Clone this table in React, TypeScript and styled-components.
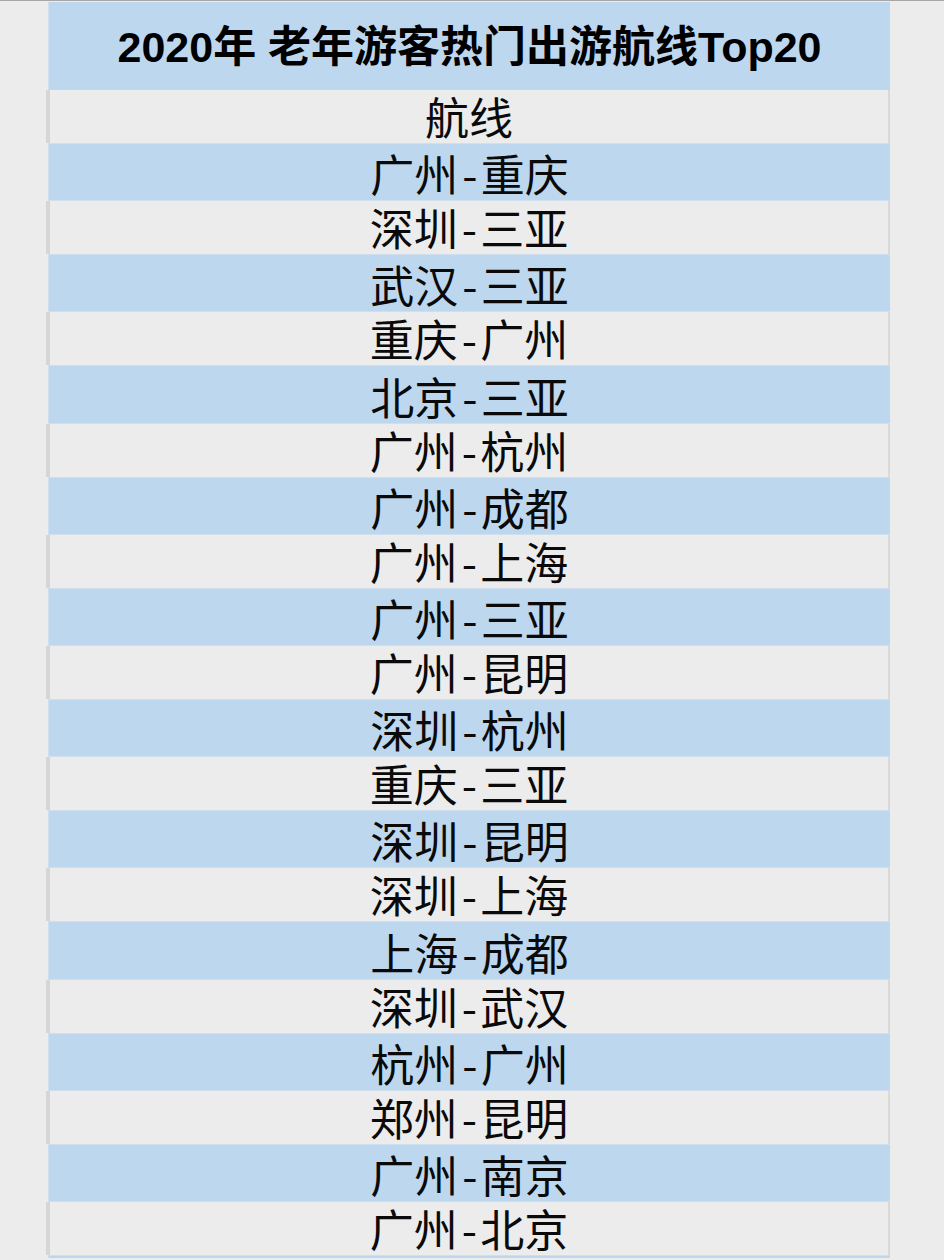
import React from "react";
import styled, { createGlobalStyle } from "styled-components";

const Global = createGlobalStyle`
  html, body {
    margin: 0;
    padding: 0;
    background: #ececec;
  }
  body {
    font-family: "Liberation Sans", "Noto Sans CJK SC", sans-serif;
    color: #000;
  }
`;

const Page = styled.div`
  border-top: 1px solid #a7a7a7;
  padding-top: 1px;
  height: 1258px;
  overflow: hidden;
  box-sizing: border-box;
`;

const Table = styled.div`
  display: flex;
  flex-direction: column;
  margin-left: 46px;
  width: 844px;
`;

const TitleRow = styled.div`
  margin-left: 2px;
  height: 88px;
  box-sizing: border-box;
  background: #bdd7ee;
  border-left: 1px solid #cfe0f0;
  display: flex;
  align-items: center;
  justify-content: center;
  font-family: "Liberation Sans", "Noto Sans CJK SC", sans-serif;
  font-weight: 700;
  font-size: 43px;
  line-height: 50px;
  padding-top: 2px;
  white-space: nowrap;
`;

const Row = styled.div<{ $blue: boolean }>`
  box-sizing: border-box;
  display: flex;
  align-items: flex-end;
  justify-content: center;
  font-family: "Noto Sans CJK SC", "Liberation Sans", sans-serif;
  font-size: 44px;
  line-height: 40px;
  white-space: nowrap;
  color: #0a0a0a;
  padding-bottom: 7px;
  ${(p) =>
    p.$blue
      ? `
    height: 58.2px;
    margin-left: 2px;
    background: #bdd7ee;
    border-left: 1px solid #cfdfee;
    border-top: 1px solid #cfdfee;
    border-bottom: 1px solid #cfdfee;
  `
      : `
    height: 53px;
    background: #ececec;
    border-left: 4px solid #d6d6d6;
    border-right: 2px solid #d9d9d9;
  `}
`;

const Dash = styled.span`
  margin: 0 3px 0 4px;
`;

const routes = [
  "广州-重庆",
  "深圳-三亚",
  "武汉-三亚",
  "重庆-广州",
  "北京-三亚",
  "广州-杭州",
  "广州-成都",
  "广州-上海",
  "广州-三亚",
  "广州-昆明",
  "深圳-杭州",
  "重庆-三亚",
  "深圳-昆明",
  "深圳-上海",
  "上海-成都",
  "深圳-武汉",
  "杭州-广州",
  "郑州-昆明",
  "广州-南京",
  "广州-北京",
];

export default function App() {
  return (
    <>
      <Global />
      <Page>
        <Table>
          <TitleRow>2020年 老年游客热门出游航线Top20</TitleRow>
          <Row $blue={false}>航线</Row>
          {routes.map((r, i) => {
            const [from, to] = r.split("-");
            return (
              <Row key={i} $blue={i % 2 === 0}>
                {from}
                <Dash>-</Dash>
                {to}
              </Row>
            );
          })}
          <Row $blue={true}>&nbsp;</Row>
        </Table>
      </Page>
    </>
  );
}
